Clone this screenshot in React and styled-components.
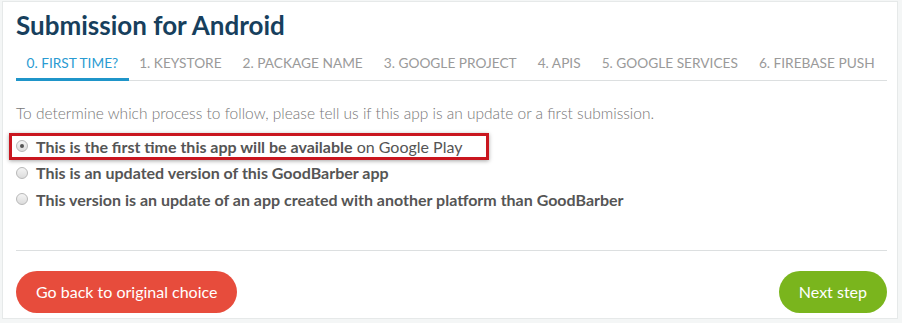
import React from 'react';
import styled, { createGlobalStyle } from 'styled-components';

const GlobalStyle = createGlobalStyle`
  html, body {
    margin: 0;
    padding: 0;
    background: #f4f6f6;
    font-family: Lato, "Open Sans", sans-serif;
  }
`;

const Panel = styled.div`
  box-sizing: border-box;
  margin: 1px 0 0 2px;
  width: 896px;
  height: 318px;
  background: #fff;
  border: 1px solid #e6e9e9;
  padding: 6px 10px 0 13px;
  display: flex;
  flex-direction: column;
`;

const Title = styled.h1`
  margin: 0;
  font-size: 26px;
  font-weight: 700;
  color: #173f5d;
  line-height: 34px;
`;

const Tabs = styled.nav`
  display: flex;
  margin-top: 8px;
  border-bottom: 1px solid #dcdfe0;
`;

const Tab = styled.div`
  box-sizing: border-box;
  height: 31px;
  margin-bottom: -1px;
  padding: 0 10.5px;
  line-height: 25px;
  font-size: 13.7px;
  white-space: nowrap;
  text-transform: uppercase;
  color: ${({ active }) => (active ? '#2a9bd2' : '#9a9a9a')};
  border-bottom: 3px solid ${({ active }) => (active ? '#1f95c9' : 'transparent')};
`;

const Intro = styled.p`
  margin: 23px 0 10px;
  font-size: 15.5px;
  line-height: 19px;
  font-weight: 300;
  color: #777;
`;

const Options = styled.div`
  display: flex;
  flex-direction: column;
  padding-bottom: 37px;
  border-bottom: 1px solid #dcdfe0;
`;

const Option = styled.label`
  position: relative;
  display: flex;
  align-items: center;
  height: 26.5px;
  font-size: 16px;
  font-weight: 700;
  color: #555;
`;

const Highlight = styled.span`
  position: absolute;
  left: -7px;
  top: 0;
  width: 480px;
  height: 27px;
  box-sizing: border-box;
  border: 3px solid #c9161f;
  box-shadow: 0 1px 4px rgba(0, 0, 0, 0.35);
  pointer-events: none;
`;

const Radio = styled.span`
  box-sizing: border-box;
  width: 12px;
  height: 12px;
  margin-right: 8px;
  border-radius: 50%;
  border: 1px solid #b8b8b8;
  background: linear-gradient(#f4f4f4, #dcdcdc);
  display: flex;
  align-items: center;
  justify-content: center;

  &::after {
    content: '';
    width: 4px;
    height: 4px;
    border-radius: 50%;
    background: ${({ checked }) => (checked ? '#555' : 'transparent')};
  }
`;

const Light = styled.span`
  font-weight: 400;
  white-space: pre;
`;

const Footer = styled.div`
  display: flex;
  justify-content: space-between;
  margin-top: 20px;
`;

const Button = styled.button`
  height: 42px;
  padding: 0 20px;
  border: none;
  border-radius: 21px;
  font-family: Lato, sans-serif;
  font-size: 16px;
  color: #fff;
  background: ${({ variant }) => (variant === 'back' ? '#e74c3c' : '#7ab51d')};
`;

const tabs = [
  '0. First time?',
  '1. Keystore',
  '2. Package name',
  '3. Google project',
  '4. APIs',
  '5. Google services',
  '6. Firebase push',
];

export default function App() {
  return (
    <>
      <GlobalStyle />
      <Panel>
        <Title>Submission for Android</Title>
        <Tabs>
          {tabs.map((t, i) => (
            <Tab key={t} active={i === 0}>{t}</Tab>
          ))}
        </Tabs>
        <Intro>
          To determine which process to follow, please tell us if this app is an update or a first submission.
        </Intro>
        <Options>
          <Option>
            <Highlight />
            <Radio checked />
            This is the first time this app will be available<Light> on Google Play</Light>
          </Option>
          <Option>
            <Radio />
            This is an updated version of this GoodBarber app
          </Option>
          <Option>
            <Radio />
            This version is an update of an app created with another platform than GoodBarber
          </Option>
        </Options>
        <Footer>
          <Button variant="back">Go back to original choice</Button>
          <Button variant="next">Next step</Button>
        </Footer>
      </Panel>
    </>
  );
}
